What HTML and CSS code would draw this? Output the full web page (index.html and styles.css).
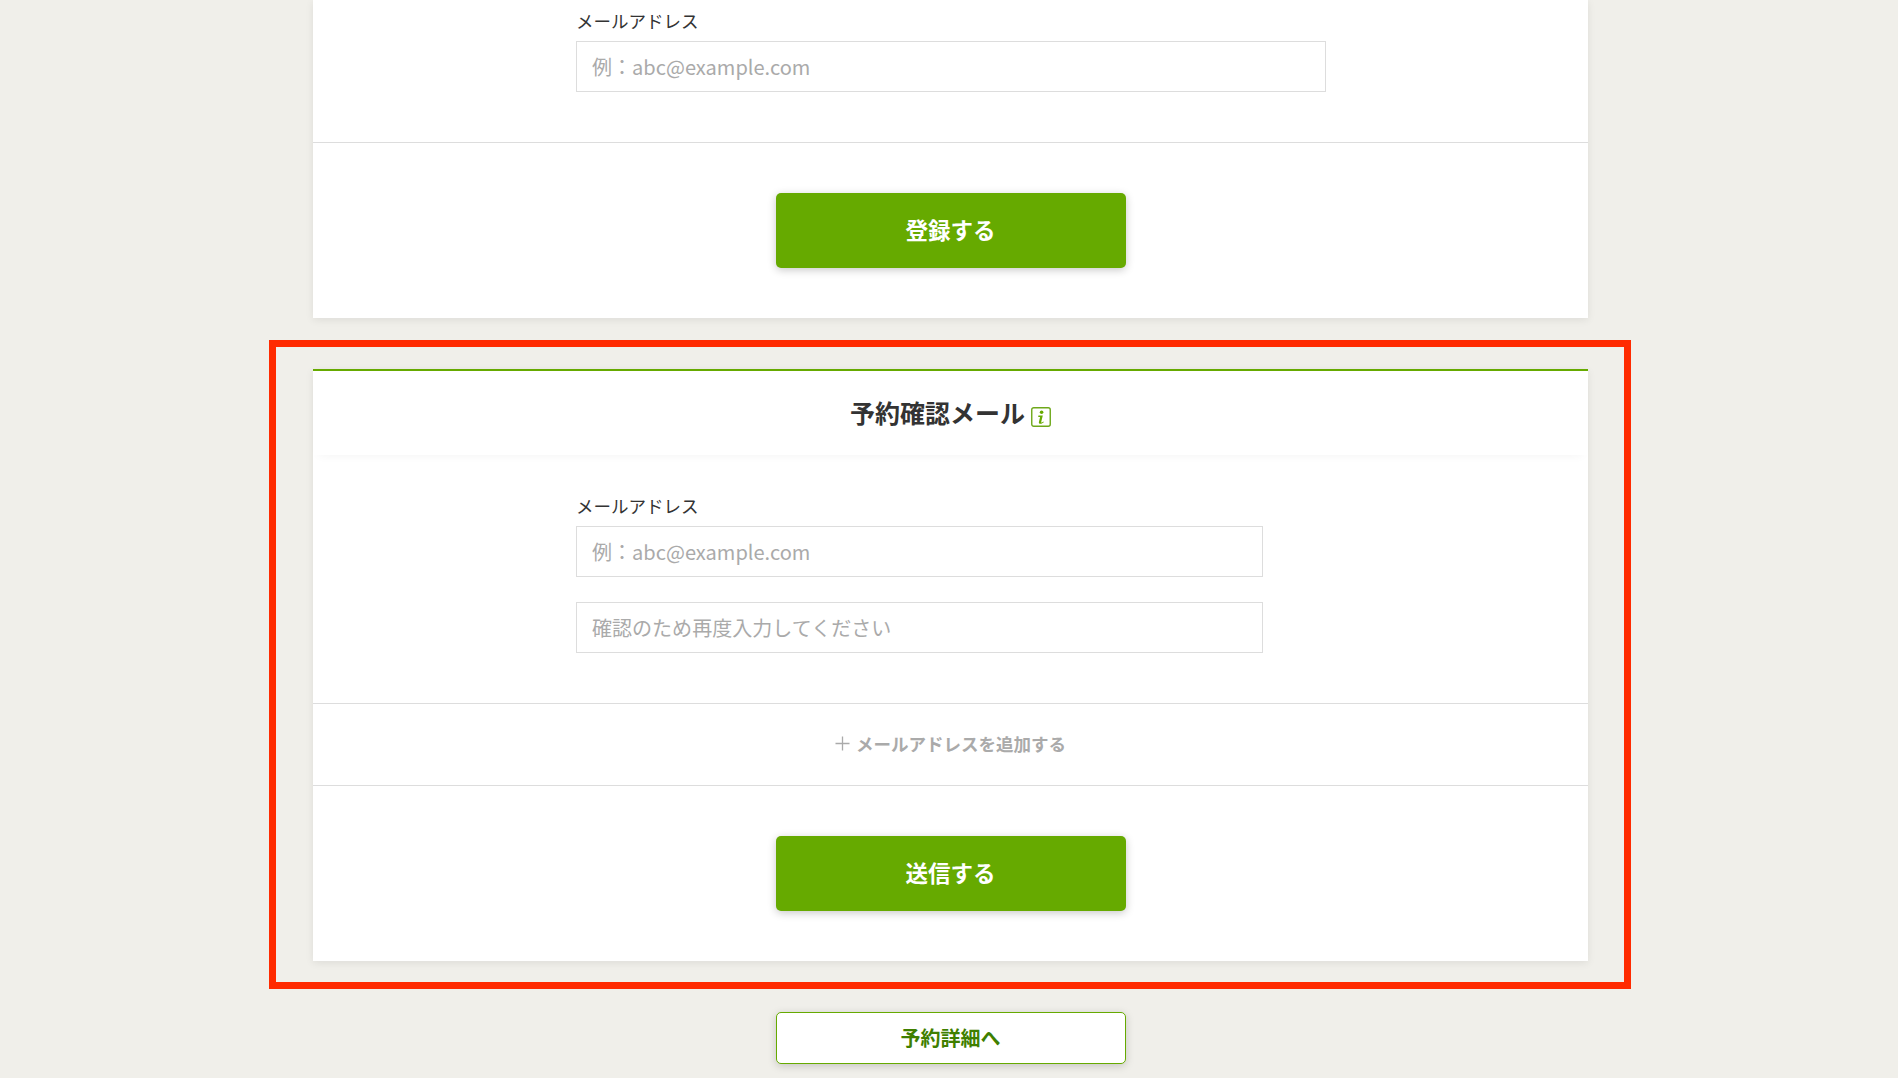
FILE: index.html
```html
<!DOCTYPE html>
<html lang="ja">
  <head>
    <meta charset="UTF-8" />
    <meta name="viewport" content="width=device-width, initial-scale=1.0" />
    <title>予約確認メール</title>
    <link rel="stylesheet" href="styles.css">
  </head>
  <body>
    <div class="page">
      <section class="card">
        <div class="form-body form-body-first">
          <label class="field-label">メールアドレス</label>
          <input class="text-input input-wide" type="text" placeholder="例：abc@example.com">
        </div>
        <div class="button-row">
          <button class="btn-primary" type="button">登録する</button>
        </div>
      </section>

      <section class="card card-accent">
        <div class="frame"></div>
        <h2 class="card-title">
          予約確認メール
          <svg class="info-icon" width="20" height="20" viewBox="0 0 20 20">
            <rect x="0.75" y="0.75" width="18.5" height="18.5" rx="2" fill="none" stroke="#6ea81a" stroke-width="1.4"/>
            <circle cx="10.6" cy="5.2" r="1.8" fill="#66aa00"/>
            <path d="M7.4 8.6h4.4l-1.6 6.3c-.1.5.3.7.7.5l1.5-.8.4.7c-1 .9-2.1 1.5-3.4 1.5-1.2 0-1.8-.7-1.5-1.8l1.2-5.1H7.2z" fill="#66aa00"/>
          </svg>
        </h2>
        <div class="form-body">
          <label class="field-label">メールアドレス</label>
          <input class="text-input" type="text" placeholder="例：abc@example.com">
          <input class="text-input input-next" type="text" placeholder="確認のため再度入力してください">
        </div>
        <div class="add-row">
          <svg class="plus-icon" width="15" height="15" viewBox="0 0 15 15">
            <path d="M7.5 0.5v14M0.5 7.5h14" stroke="#aaaaaa" stroke-width="1.3" fill="none"/>
          </svg>
          <span>メールアドレスを追加する</span>
        </div>
        <div class="button-row">
          <button class="btn-primary" type="button">送信する</button>
        </div>
      </section>

      <button class="btn-outline" type="button">予約詳細へ</button>
    </div>
  </body>
</html>
```

FILE: styles.css
```css
* {
  box-sizing: border-box;
}
body {
  margin: 0;
  background: #f0efea;
  color: #333;
  font-family: "Noto Sans CJK JP", "Noto Sans", sans-serif;
}
.page {
  display: flex;
  flex-direction: column;
  align-items: center;
  gap: 51px;
  padding: 0 0 14px 3px;
}
.card {
  position: relative;
  width: 1275px;
  background: #fff;
  box-shadow: 0 2px 8px rgba(0, 0, 0, 0.08);
}
.card-accent {
  border-top: 2px solid #66aa00;
}
/* red marker round the second card */
.frame {
  position: absolute;
  top: -31px;
  left: -44px;
  right: -43px;
  bottom: -28px;
  border: 7px solid #ff2a00;
  pointer-events: none;
}
.card-title {
  display: flex;
  justify-content: center;
  align-items: center;
  gap: 6px;
  height: 84px;
  margin: 0;
  padding-bottom: 2px;
  font-size: 25px;
  font-weight: 700;
  line-height: 1;
  box-shadow: 0 6px 10px -6px rgba(0, 0, 0, 0.05);
}
.info-icon {
  margin-top: 9px;
}
.form-body {
  display: flex;
  flex-direction: column;
  align-items: flex-start;
  padding: 38px 0 50px 263px;
}
.form-body-first {
  padding-top: 8px;
}
.field-label {
  margin-bottom: 7px;
  font-size: 17.5px;
  line-height: 26px;
  color: #333;
}
.text-input {
  display: block;
  width: 687px;
  height: 51px;
  padding: 0 15px;
  border: 1px solid #ddd;
  border-radius: 0;
  background: #fff;
  font-family: inherit;
  font-size: 20.05px;
  color: #333;
  outline: none;
}
.text-input::placeholder {
  color: #aaa;
  opacity: 1;
}
.input-wide {
  width: 750px;
}
.input-next {
  margin-top: 25px;
}
.add-row {
  display: flex;
  justify-content: center;
  align-items: center;
  gap: 6px;
  height: 82px;
  padding-bottom: 2px;
  border-top: 1px solid #ddd;
  font-size: 17.5px;
  font-weight: 700;
  color: #aaa;
}
.button-row {
  display: flex;
  justify-content: center;
  padding: 50px 0;
  border-top: 1px solid #ddd;
}
.btn-primary {
  width: 350px;
  height: 75px;
  padding: 0 0 3px;
  border: 0;
  border-radius: 5px;
  background: #66aa00;
  box-shadow: 0 2px 8px rgba(0, 0, 0, 0.22);
  font-family: inherit;
  font-size: 22.5px;
  font-weight: 700;
  color: #fff;
}
.btn-outline {
  width: 350px;
  height: 52px;
  padding: 0 0 2px;
  border: 1px solid #66aa00;
  border-radius: 5px;
  background: #fff;
  box-shadow: 0 2px 8px rgba(0, 0, 0, 0.18);
  font-family: inherit;
  font-size: 20px;
  font-weight: 700;
  color: #3f7f00;
}
```
